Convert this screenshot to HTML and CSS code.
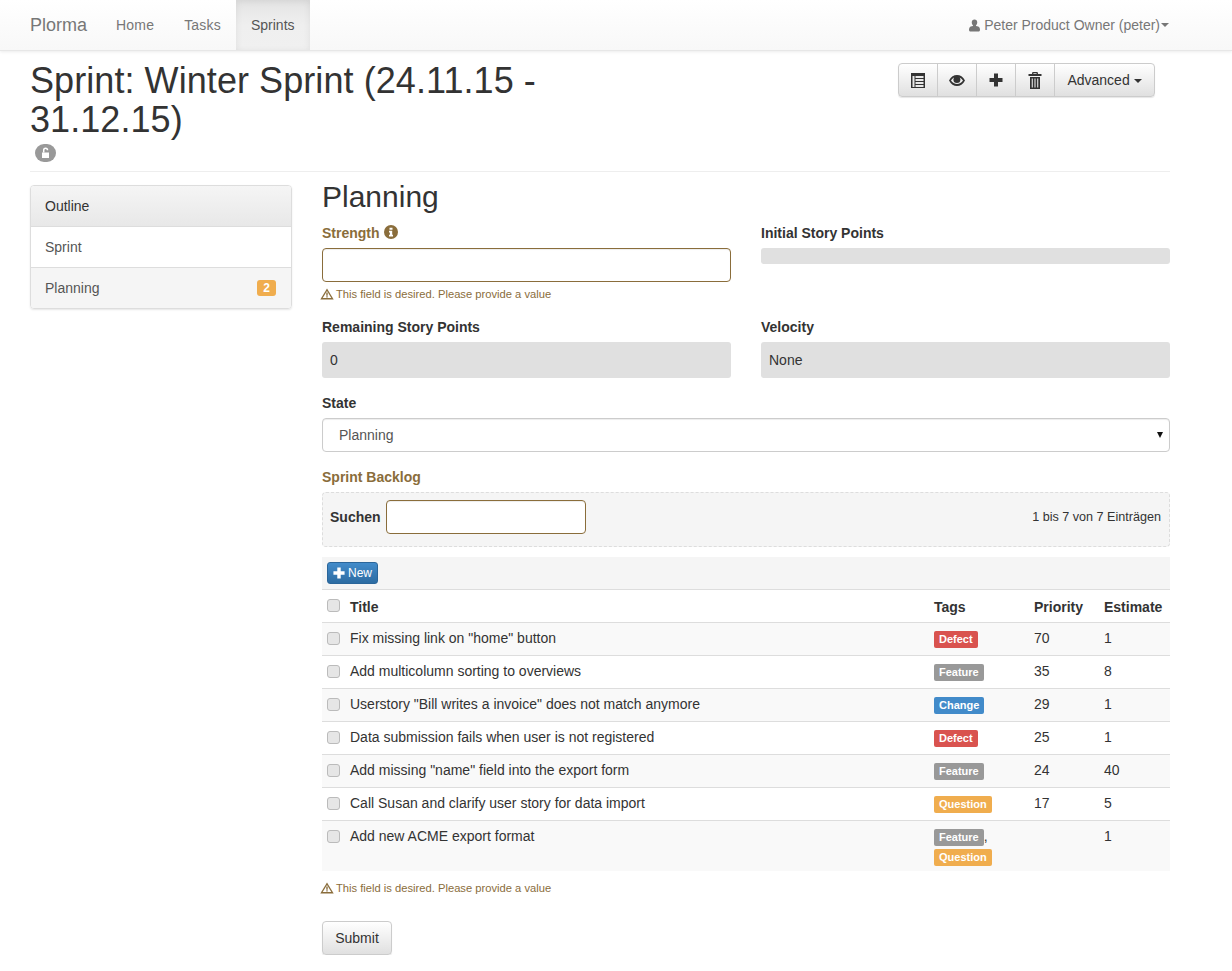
FILE: index.html
```html
<!DOCTYPE html>
<html lang="en">
<head>
<meta charset="utf-8">
<title>Plorma</title>
<link rel="stylesheet" href="styles.css">
</head>
<body>
<nav class="navbar">
  <a class="brand">Plorma</a>
  <a class="nav-link">Home</a>
  <a class="nav-link">Tasks</a>
  <a class="nav-link active">Sprints</a>
  <a class="nav-user">
    <svg class="user-icon" viewBox="0 0 12 13" width="11" height="13"><path d="M6 0c1.900 0 3 1.300 3 3.100 0 1.300-.6 2.500-1.300 3.100v.9c1.700.3 3.300.9 3.800 1.800.3.500.5 1.400.5 2.100 0 1.200-.6 2-1.700 2H1.700C.6 13 0 12.200 0 11c0-.7.200-1.600.5-2.100.5-.9 2.100-1.500 3.800-1.800v-.9C3.600 5.600 3 4.400 3 3.100 3 1.300 4.100 0 6 0z"/></svg>
    Peter Product Owner (peter)<span class="caret"></span>
  </a>
</nav>

<div class="page">
  <header class="page-header">
    <div class="title-col">
      <h1>Sprint: Winter Sprint (24.11.15 - 31.12.15)</h1>
      <span class="lock-badge">
        <svg viewBox="0 0 12 12" width="12" height="12"><path d="M2 5.500h7v5.500H2z" fill="#fff"/><path d="M3.700 5.500V3.300C3.700 2 4.500 1.300 5.600 1.300S7.500 2 7.500 3.300" fill="none" stroke="#fff" stroke-width="1.500"/></svg>
      </span>
    </div>
    <div class="btn-group">
      <button class="btn icon-btn" title="List">
        <svg viewBox="0 0 14 15" width="14" height="15"><path d="M0 0h14v15H0z" fill="#333"/><path d="M4.500 3h8v2h-8zM4.500 6h8v2h-8zM4.500 9h8v2h-8zM4.500 12h8v2h-8zM1.500 3h2v11h-2z" fill="#e8e8e8"/></svg>
      </button>
      <button class="btn icon-btn" title="View">
        <svg viewBox="0 0 16 13" width="16" height="13"><path d="M0 6.500C2 2.800 4.800 1 8 1s6 1.800 8 5.500C14 10.200 11.200 12 8 12s-6-1.800-8-5.500zm2 0c1.500 2.200 3.500 3.500 6 3.500s4.500-1.300 6-3.500C13 5 11.900 4 10.700 3.400c.4.600.7 1.400.7 2.200a3.500 3.500 0 0 1-7 0c0-.8.300-1.600.7-2.200C3.900 4 3 5 2 6.500z" fill="#333" fill-rule="evenodd"/><circle cx="7" cy="4.800" r="1.100" fill="#333"/></svg>
      </button>
      <button class="btn icon-btn" title="Add">
        <svg viewBox="0 0 14 14" width="14" height="14"><path d="M5 0.500h4v4.500h4.500v4H9v4.500H5V9H.5V5H5z" fill="#333"/></svg>
      </button>
      <button class="btn icon-btn" title="Delete">
        <svg viewBox="0 0 14 17" width="14" height="17"><path d="M4.500 0h5l.6 2H13.500v2H.5V2h3.400zM5.500 1.200L5.300 2h3.400l-.2-.8zM2 5h10v12H2z" fill="#333" fill-rule="evenodd"/><path d="M4.300 6.500V15.500M7 6.500V15.500M9.700 6.500V15.500" stroke="#d8d8d8" stroke-width="1.200"/></svg>
      </button>
      <button class="btn text-btn">Advanced <span class="caret dark"></span></button>
    </div>
  </header>

  <div class="columns">
    <aside class="outline">
      <div class="outline-head">Outline</div>
      <a class="outline-item">Sprint</a>
      <a class="outline-item current">Planning <span class="badge">2</span></a>
    </aside>

    <main class="main">
      <h2>Planning</h2>
      <div class="field-row">
        <div class="field first-field">
          <label class="warn-label">Strength
            <svg class="info" viewBox="0 0 14 14" width="14" height="14"><circle cx="7" cy="7" r="7" fill="#8a6d3b"/><path d="M5.500 2.700h3v2h-3zM5 5.700h3.200v4H9v1.700H5V9.700h.9V7.400H5z" fill="#fff"/></svg>
          </label>
          <input class="input warn-input" type="text">
          <p class="help">
            <svg viewBox="0 0 14 12" width="14" height="12"><path d="M7 .5l6.700 11H.300z" fill="#8a6d3b"/><path d="M7 3l4.300 7H2.700z" fill="#fff"/><path d="M6.300 4.500h1.400v3.200H6.300zM6.300 8.300h1.400v1.200H6.300z" fill="#8a6d3b"/></svg>
            This field is desired. Please provide a value
          </p>
        </div>
        <div class="field first-field">
          <label>Initial Story Points</label>
          <div class="static-bar"></div>
        </div>
      </div>
      <div class="field-row">
        <div class="field">
          <label>Remaining Story Points</label>
          <div class="static">0</div>
        </div>
        <div class="field">
          <label>Velocity</label>
          <div class="static">None</div>
        </div>
      </div>
      <div class="field state-field">
        <label>State</label>
        <div class="select-wrap">
          <select class="input select"><option>Planning</option></select>
        </div>
      </div>

      <div class="backlog-label">Sprint Backlog</div>
      <div class="search-box">
        <label class="search-label">Suchen</label>
        <input class="input warn-input search-input" type="text">
        <span class="count">1 bis 7 von 7 Einträgen</span>
      </div>
      <div class="toolbar">
        <button class="btn-new">
          <svg viewBox="0 0 14 14" width="12" height="12"><path d="M5 0.500h4v4.500h4.500v4H9v4.500H5V9H.5V5H5z" fill="#fff"/></svg>
          New
        </button>
      </div>
      <table class="backlog">
        <colgroup>
          <col class="col-check"><col class="col-title"><col class="col-tags"><col class="col-prio"><col class="col-est">
        </colgroup>
        <thead>
          <tr><th><input type="checkbox"></th><th>Title</th><th>Tags</th><th>Priority</th><th>Estimate</th></tr>
        </thead>
        <tbody>
          <tr><td><input type="checkbox"></td><td>Fix missing link on "home" button</td><td><span class="tag defect">Defect</span></td><td>70</td><td>1</td></tr>
          <tr><td><input type="checkbox"></td><td>Add multicolumn sorting to overviews</td><td><span class="tag feature">Feature</span></td><td>35</td><td>8</td></tr>
          <tr><td><input type="checkbox"></td><td>Userstory "Bill writes a invoice" does not match anymore</td><td><span class="tag change">Change</span></td><td>29</td><td>1</td></tr>
          <tr><td><input type="checkbox"></td><td>Data submission fails when user is not registered</td><td><span class="tag defect">Defect</span></td><td>25</td><td>1</td></tr>
          <tr><td><input type="checkbox"></td><td>Add missing "name" field into the export form</td><td><span class="tag feature">Feature</span></td><td>24</td><td>40</td></tr>
          <tr><td><input type="checkbox"></td><td>Call Susan and clarify user story for data import</td><td><span class="tag question">Question</span></td><td>17</td><td>5</td></tr>
          <tr><td><input type="checkbox"></td><td>Add new ACME export format</td><td class="tags-multi"><span class="tag feature">Feature</span>,<br><span class="tag question">Question</span></td><td></td><td>1</td></tr>
        </tbody>
      </table>
      <p class="help table-help">
        <svg viewBox="0 0 14 12" width="14" height="12"><path d="M7 .5l6.700 11H.300z" fill="#8a6d3b"/><path d="M7 3l4.300 7H2.700z" fill="#fff"/><path d="M6.300 4.500h1.400v3.200H6.300zM6.300 8.300h1.400v1.200H6.300z" fill="#8a6d3b"/></svg>
        This field is desired. Please provide a value
      </p>
      <button class="btn submit">Submit</button>
    </main>
  </div>
</div>
</body>
</html>
```

FILE: styles.css
```css
* { box-sizing: border-box; }
body { margin: 0; font-family: "Liberation Sans", Arial, sans-serif; font-size: 14px; line-height: 20px; color: #333; background: #fff; }

.navbar { display: flex; height: 51px; padding: 0 63px 0 30px; background: linear-gradient(to bottom, #fff, #f8f8f8); border-bottom: 1px solid #e7e7e7; box-shadow: 0 1px 3px rgba(0,0,0,.08); }
.brand { font-size: 18px; line-height: 50px; color: #777; margin-right: 14px; }
.nav-link { padding: 15px; line-height: 20px; height: 50px; color: #777; letter-spacing: .2px; }
.nav-link.active { color: #555; letter-spacing: 0; background: linear-gradient(to bottom, #e4e4e4, #efefef 50%, #f0f0f0); box-shadow: inset 2px 3px 6px rgba(0,0,0,.04), inset -2px 0 6px rgba(0,0,0,.04); }
.nav-user { margin-left: auto; line-height: 50px; color: #777; display: flex; align-items: center; gap: 4px; }
.user-icon { fill: #777; }
.caret { display: inline-block; width: 0; height: 0; border-top: 4px solid #777; border-left: 4px solid transparent; border-right: 4px solid transparent; margin-left: -3px; vertical-align: middle; }
.caret.dark { border-top-color: #333; margin-left: 0; }

.page { padding: 0 62px 0 30px; }
.page-header { display: flex; justify-content: space-between; border-bottom: 1px solid #eee; height: 121px; }
.title-col { width: 570px; }
h1 { margin: 10px 0 0; font-size: 36px; line-height: 39px; font-weight: 500; color: #333; letter-spacing: .07px; }
.lock-badge { display: flex; align-items: center; justify-content: center; width: 21px; height: 18px; margin: 5px 0 0 5px; border-radius: 10px; background: #999; }

.btn-group { display: flex; height: 34px; margin: 12px 15px 0 0; border: 1px solid #ccc; border-radius: 4px; box-shadow: 0 1px 1px rgba(0,0,0,.1); background: linear-gradient(to bottom, #fff, #e0e0e0); }
.btn { font: inherit; color: #333; cursor: pointer; background: linear-gradient(to bottom, #fff, #e0e0e0); border: 1px solid #ccc; border-radius: 4px; }
.btn-group .btn { border: 0; border-right: 1px solid #ccc; border-radius: 0; background: none; padding: 0; height: 32px; }
.btn-group .btn:last-child { border-right: 0; }
.icon-btn { width: 39px; display: flex; align-items: center; justify-content: center; }
.btn-group .text-btn { width: 99px; }

.columns { display: flex; gap: 30px; margin-top: 13px; }
.outline { flex: none; width: 262px; height: 124px; border: 1px solid #ddd; border-radius: 4px; box-shadow: 0 1px 2px rgba(0,0,0,.1); overflow: hidden; }
.outline-head { height: 41px; padding: 10px 14px; background: linear-gradient(to bottom, #f5f5f5, #e8e8e8); border-bottom: 1px solid #ddd; }
.outline-item { display: flex; justify-content: space-between; align-items: center; height: 40px; padding: 0 15px 0 14px; color: #555; background: #fff; }
.outline-item.current { height: 41px; background: #f5f5f5; border-top: 1px solid #ddd; }
.badge { padding: 0 6px; height: 16px; font-size: 12px; line-height: 16px; font-weight: 700; color: #fff; background: #f0ad4e; border-radius: 3px; }

.main { width: 848px; }
h2 { margin: -5px 0 0; font-size: 30px; line-height: 33px; font-weight: 500; color: #333; height: 33px; }
.field-row { display: flex; gap: 30px; }
.field { flex: 1 1 0; min-width: 0; }
.first-field { height: 104px; padding-top: 10px; }
label { display: block; font-weight: 700; line-height: 20px; margin-bottom: 5px; }
.warn-label { color: #8a6d3b; }
.info { vertical-align: -1px; margin-left: 1px; }
.input { display: block; width: 100%; height: 34px; font: inherit; color: #555; background: #fff; border: 1px solid #ccc; border-radius: 4px; box-shadow: inset 0 1px 1px rgba(0,0,0,.075); }
.warn-input { border-color: #8a6d3b; }
.help { display: flex; align-items: center; gap: 2px; margin: 5px 0 0 -2px; font-size: 11.2px; line-height: 14px; color: #8a6d3b; }
.static { height: 36px; padding: 8px; background: #e0e0e0; border-radius: 3px; }
.static-bar { height: 16px; background: #e0e0e0; border-radius: 3px; }
.state-field { margin-top: 15px; }
.select-wrap { position: relative; }
.select-wrap::after { content: ""; position: absolute; right: 7px; top: 14px; border-top: 6px solid #111; border-left: 3px solid transparent; border-right: 3px solid transparent; }
.select { appearance: none; padding: 0 16px; color: #555; }
.backlog-label { margin-top: 15px; font-weight: 700; color: #8a6d3b; }
.search-box { display: flex; align-items: center; height: 55px; margin-top: 5px; padding: 0 8px 5px 7px; background: #f5f5f5; border: 1px dashed #ddd; border-radius: 4px; }
.search-label { margin: 0 5px 0 0; }
.search-input { width: 200px; }
.count { margin-left: auto; font-size: 12.6px; color: #333; }
.toolbar { height: 33px; margin-top: 10px; padding: 5px; background: #f5f5f5; border-bottom: 1px solid #ddd; }
.btn-new { display: flex; align-items: center; gap: 3px; height: 22px; padding: 0 5px; font: inherit; font-size: 12px; color: #fff; background: linear-gradient(to bottom, #428bca, #2d6ca2); border: 1px solid #2b669a; border-radius: 3px; }

.backlog { width: 100%; table-layout: fixed; border-collapse: collapse; }
.col-check { width: 23px; }
.col-tags { width: 100px; }
.col-prio { width: 70px; }
.col-est { width: 71px; }
.backlog th, .backlog td { padding: 5px; height: 33px; text-align: left; vertical-align: top; border-bottom: 1px solid #ddd; }
.backlog th { height: 32px; padding-top: 7px; }
.backlog th input { margin-top: 2px; }
.backlog tbody tr:last-child td { border-bottom: 0; height: 50px; padding-bottom: 4px; }
.backlog tbody tr:nth-child(odd) { background: #f9f9f9; }
.backlog input { appearance: none; display: block; width: 13px; height: 13px; margin: 4px 0 0; border: 1px solid #bbb; border-radius: 3px; background: #e6e6e6; }
.tag { display: inline-block; padding: 0 5px; height: 17px; margin-top: 3px; font-size: 11px; line-height: 17px; font-weight: 700; color: #fff; border-radius: 2px; vertical-align: top; }
.tags-multi { line-height: 20px; }
.defect { background: #d9534f; }
.feature { background: #999; }
.change { background: #428bca; }
.question { background: #f0ad4e; }
.table-help { margin-top: 10px; }
.submit { display: block; width: 70px; height: 34px; margin-top: 26px; box-shadow: 0 1px 1px rgba(0,0,0,.1); }
```
